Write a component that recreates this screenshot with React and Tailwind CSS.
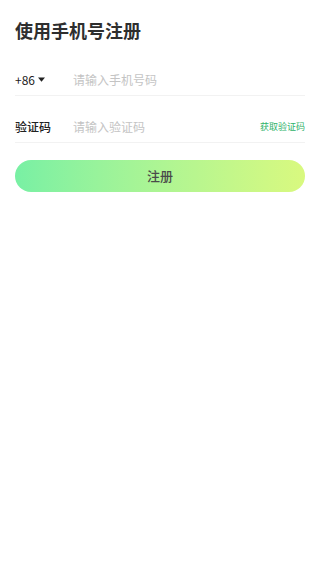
import React from 'react';

const App = () => {
  return (
    <div
      className="min-h-[569px] w-[320px] bg-white px-[15px]"
      style={{ fontFamily: '"Noto Sans CJK SC", "Noto Sans", sans-serif' }}
    >
      <h1 className="pt-[17px] text-[18px] font-bold leading-[26px] text-[#2e2e2e]">使用手机号注册</h1>

      <div className="mt-[21px] flex h-[32px] items-center border-b border-[#f2f2f2]">
        <div className="flex w-[58px] items-center text-[12px] text-[#222]">
          <span>+86</span>
          <svg className="ml-[3px]" width="7" height="5" viewBox="0 0 7 5">
            <path d="M0 0.5h7L3.5 4.8z" fill="#222" />
          </svg>
        </div>
        <span className="text-[12px] text-[#c4c4c4]">请输入手机号码</span>
      </div>

      <div className="mt-[15px] flex h-[32px] items-center border-b border-[#f2f2f2]">
        <span className="w-[58px] text-[12px] font-medium text-[#222]">验证码</span>
        <span className="flex-1 text-[12px] text-[#c4c4c4]">请输入验证码</span>
        <span className="text-[9px] text-[#2fb36a]">获取验证码</span>
      </div>

      <button
        type="button"
        className="mt-[17px] flex h-[32px] w-full items-center justify-center rounded-full bg-gradient-to-r from-[#78f0a4] to-[#d9f97f] text-[13px] font-medium text-[#4a4a4a]"
      >
        注册
      </button>
    </div>
  );
};

export default App;
